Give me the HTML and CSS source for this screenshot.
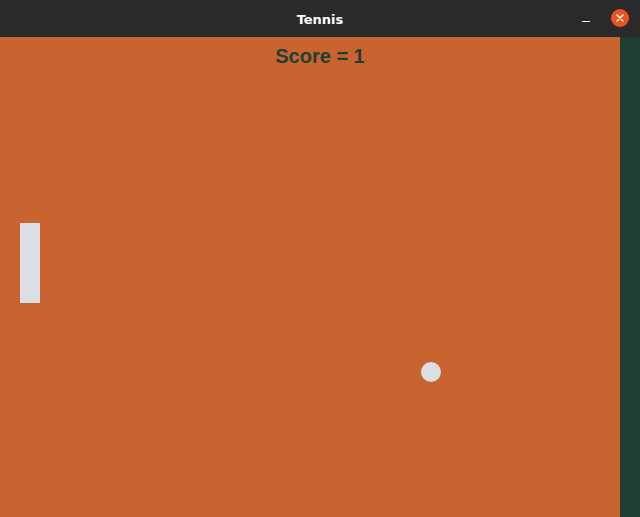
FILE: index.html
```html
<!DOCTYPE html>
<html>
<head>
<meta charset="utf-8">
<link rel="stylesheet" href="styles.css">
</head>
<body>
<div class="window">
  <div class="titlebar">
    <span class="title">Tennis</span>
    <div class="controls">
      <span class="minimize"></span>
      <span class="close">
        <svg width="18" height="18" viewBox="0 0 18 18"><circle cx="9" cy="9" r="9" fill="#e95420"/><path d="M6 6L12 12M12 6L6 12" stroke="#fff" stroke-width="1.3" stroke-linecap="round"/></svg>
      </span>
    </div>
  </div>
  <div class="content">
    <div class="court">
      <div class="paddle"></div>
      <div class="ball"></div>
    </div>
    <div class="wall"></div>
    <div class="score">Score = 1</div>
  </div>
</div>
</body>
</html>
```

FILE: styles.css
```css
html, body {
  margin: 0;
  padding: 0;
  background: #2b2b2b;
}
.window {
  width: 640px;
  height: 517px;
  display: flex;
  flex-direction: column;
  overflow: hidden;
}
.titlebar {
  height: 37px;
  flex: none;
  background: #2b2a2a;
  border-radius: 8px 8px 0 0;
  position: relative;
  display: flex;
  align-items: center;
  justify-content: center;
}
.title {
  color: #ffffff;
  font-family: "DejaVu Sans", sans-serif;
  font-weight: bold;
  font-size: 13px;
  margin-top: 1px;
}
.controls {
  position: absolute;
  right: 11px;
  top: 9px;
  display: flex;
  align-items: center;
  gap: 21px;
}
.minimize {
  width: 8px;
  height: 1px;
  background: #ffffff;
  margin-top: 7px;
}
.close {
  width: 18px;
  height: 18px;
  display: block;
}
.close svg { display: block; }
.content {
  flex: 1;
  display: flex;
  position: relative;
}
.court {
  width: 620px;
  background: #c9632f;
  position: relative;
}
.wall {
  flex: 1;
  background: #1f3f33;
}
.score {
  position: absolute;
  left: 0;
  right: 0;
  top: 8px;
  text-align: center;
  font-family: "Liberation Sans", Arial, sans-serif;
  font-weight: bold;
  font-size: 20px;
  color: #1f3f33;
}
.paddle {
  position: absolute;
  left: 20px;
  top: 186px;
  width: 20px;
  height: 80px;
  background: #d9dfe4;
}
.ball {
  position: absolute;
  left: 421px;
  top: 325px;
  width: 20px;
  height: 20px;
  border-radius: 50%;
  background: #d9dfe4;
}
```
